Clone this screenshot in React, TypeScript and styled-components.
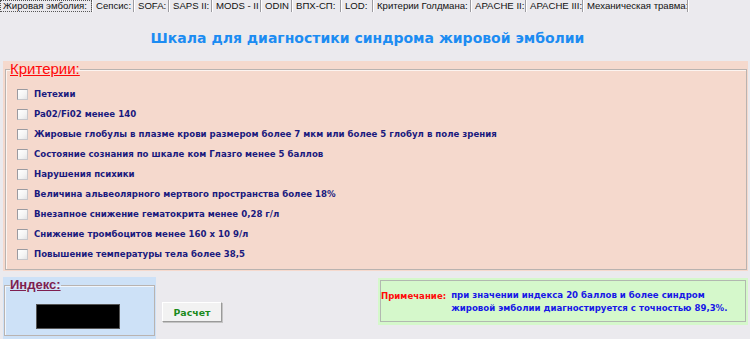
import React from "react";
import styled, { createGlobalStyle } from "styled-components";

const Global = createGlobalStyle`
  html, body { margin: 0; padding: 0; background: #ebeaee; }
  * { box-sizing: border-box; }
`;

const Window = styled.div`
  width: 750px;
  height: 339px;
  background: #ebeaee;
  font-family: "Liberation Sans", Arial, sans-serif;
  overflow: hidden;
  display: flex;
  flex-direction: column;
`;

const TabBar = styled.div`
  display: flex;
  height: 12px;
  align-items: stretch;
`;

const Tab = styled.div<{ $active?: boolean; $width: number }>`
  width: ${(p) => p.$width}px;
  flex: none;
  font-size: 9.6px;
  line-height: 11px;
  color: #111;
  padding: 0 0 0 4px;
  white-space: nowrap;
  overflow: hidden;
  border-right: 1px solid #9c9ba0;
  box-shadow: 1px 0 0 #ffffff;
  ${(p) =>
    p.$active
      ? `outline: 1px dotted #555; outline-offset: -1px; padding-left: 3px;`
      : ``}
`;

const Title = styled.h1`
  margin: 0;
  height: 49px;
  padding: 3px 15px 0 0;
  line-height: 46px;
  text-align: center;
  font-family: "DejaVu Sans", Verdana, sans-serif;
  font-weight: bold;
  font-size: 14px;
  color: #1c8cf2;
`;

const CriteriaPanel = styled.div`
  margin: 0 2px 0 3px;
  height: 210px;
  background: #f5d9cd;
  padding: 0 1px 0 2px;
`;

const GroupBox = styled.fieldset<{ $height: number; $padLeft?: number }>`
  margin: 0;
  height: ${(p) => p.$height}px;
  border: 1px solid #b9b3b0;
  box-shadow: inset 1px 1px 0 rgba(255, 255, 255, 0.7);
  padding: 0 0 0 ${(p) => p.$padLeft ?? 4}px;
  min-width: 0;
`;

const Legend = styled.legend<{ $color: string; $size: number; $bold?: boolean }>`
  padding: 0;
  font-size: ${(p) => p.$size}px;
  font-weight: ${(p) => (p.$bold ? "bold" : "normal")};
  line-height: 16px;
  color: ${(p) => p.$color};
  text-decoration: underline;
`;

const CriteriaList = styled.div`
  display: flex;
  flex-direction: column;
  padding: 7px 0 0 7px;
`;

const Row = styled.label`
  display: flex;
  align-items: center;
  height: 20px;
  gap: 6px;
`;

const CheckBox = styled.span`
  width: 11px;
  height: 11px;
  border: 1px solid #9a9aa0;
  border-right-color: #c8c8cc;
  border-bottom-color: #c8c8cc;
  background: linear-gradient(135deg, #ffffff 0%, #f4f4f4 60%, #e4e4e6 100%);
`;

const BoldText = styled.span<{ $color: string }>`
  font-family: "DejaVu Sans", Verdana, sans-serif;
  font-weight: bold;
  font-size: 8.6px;
  color: ${(p) => p.$color};
  white-space: nowrap;
`;

const BottomRow = styled.div`
  display: flex;
  align-items: flex-start;
  padding: 6px 2px 0 3px;
  flex: 1;
`;

const IndexPanel = styled.div`
  width: 153px;
  height: 62px;
  background: #cde1f7;
  padding: 0 1px 0 1px;
`;

const IndexBody = styled.div`
  display: flex;
  justify-content: center;
  padding: 11px 0 0 0;
`;

const BlackScreen = styled.div`
  width: 84px;
  height: 25px;
  background: #000;
  border: 1px solid #555;
  margin-right: 8px;
`;

const Button = styled.button`
  margin: 25px 0 0 6px;
  width: 60px;
  height: 20px;
  background: #f2f2f2;
  border: 1px solid;
  border-color: #ffffff #9a9a9a #9a9a9a #ffffff;
  box-shadow: 1px 1px 0 #c4c4c4;
  font-family: "DejaVu Sans", Verdana, sans-serif;
  font-weight: bold;
  font-size: 9.4px;
  color: #1b8a1b;
  padding: 0;
`;

const NotePanel = styled.div`
  margin-left: auto;
  margin-top: 1px;
  width: 370px;
  height: 47px;
  background: #d5f8cb;
  padding: 2px;
`;

const NoteFrame = styled.div`
  height: 42px;
  border: 1px solid #b2b8b0;
  display: flex;
  align-items: flex-start;
  padding: 8px 0 0 0;
  gap: 5px;
`;

const NoteLabel = styled(BoldText)`
  margin-top: 2px;
`;

const NoteText = styled(BoldText)`
  line-height: 13px;
`;

const tabs: [string, number][] = [
  ["Жировая эмболия:", 92],
  ["Сепсис:", 42],
  ["SOFA:", 35],
  ["SAPS II:", 43],
  ["MODS - II", 49],
  ["ODIN", 31],
  ["ВПХ-СП:", 49],
  ["LOD:", 32],
  ["Критерии Голдмана:", 98],
  ["APACHE II:", 55],
  ["APACHE III:", 57],
  ["Механическая травма:", 105],
];

const criteria = [
  "Петехии",
  "Pa02/Fi02 менее 140",
  "Жировые глобулы в плазме крови размером более 7 мкм или более 5 глобул в поле зрения",
  "Состояние сознания по шкале ком Глазго менее 5 баллов",
  "Нарушения психики",
  "Величина альвеолярного мертвого пространства более 18%",
  "Внезапное снижение гематокрита менее 0,28 г/л",
  "Снижение тромбоцитов менее 160 х 10 9/л",
  "Повышение температуры тела более 38,5",
];

export default function App() {
  return (
    <Window>
      <Global />
      <TabBar>
        {tabs.map(([t, w], i) => (
          <Tab key={t} $width={w} $active={i === 0}>
            {t}
          </Tab>
        ))}
      </TabBar>
      <Title>Шкала для диагностики синдрома жировой эмболии</Title>
      <CriteriaPanel>
        <GroupBox $height={209}>
          <Legend $color="#ff0a0a" $size={15}>
            Критерии:
          </Legend>
          <CriteriaList>
            {criteria.map((c) => (
              <Row key={c}>
                <CheckBox />
                <BoldText $color="#1a1a7e">{c}</BoldText>
              </Row>
            ))}
          </CriteriaList>
        </GroupBox>
      </CriteriaPanel>
      <BottomRow>
        <IndexPanel>
          <GroupBox $height={59} $padLeft={5}>
            <Legend $color="#7e1f50" $size={13} $bold>
              Индекс:
            </Legend>
            <IndexBody>
              <BlackScreen />
            </IndexBody>
          </GroupBox>
        </IndexPanel>
        <Button>Расчет</Button>
        <NotePanel>
          <NoteFrame>
            <NoteLabel $color="#ff0a0a">Примечание:</NoteLabel>
            <NoteText $color="#1717e6">
              при значении индекса 20 баллов и более синдром
              <br />
              жировой эмболии диагностируется с точностью 89,3%.
            </NoteText>
          </NoteFrame>
        </NotePanel>
      </BottomRow>
    </Window>
  );
}
